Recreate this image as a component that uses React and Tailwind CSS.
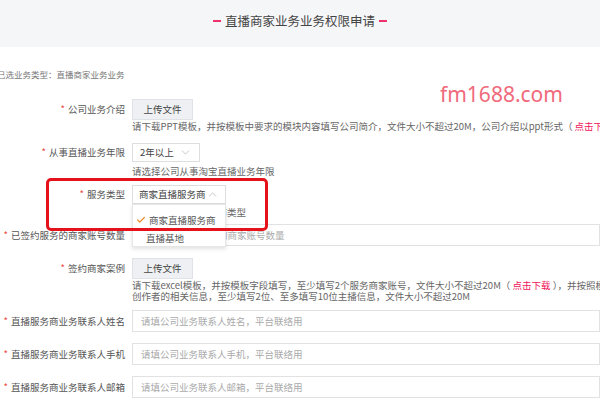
import { ChevronDown, ChevronUp, Check } from 'lucide-react';

const Star = () => <span className="text-[#e8453c] mr-[3px]">*</span>;

const Label = ({ children, className = '' }) => (
  <div className={`w-[125px] shrink-0 text-right text-[#555] whitespace-nowrap ${className}`}>
    <Star />
    {children}
  </div>
);

const UploadButton = () => (
  <button
    type="button"
    className="w-[61px] h-[21px] bg-[#eef0f3] border border-[#dfe2e6] text-[#444] text-[9.5px] leading-none"
  >
    上传文件
  </button>
);

const Hint = ({ children, className = '' }) => (
  <div className={`text-[#666] whitespace-nowrap leading-[11px] ${className}`}>{children}</div>
);

const TextInput = ({ placeholder }) => (
  <div className="flex-1 h-[22px] border border-[#e2e2e2] bg-white flex items-center pl-[8px] text-[#aaa] whitespace-nowrap overflow-hidden">
    {placeholder}
  </div>
);

export default function App() {
  return (
    <div
      className="relative w-[600px] h-[400px] overflow-hidden bg-white text-[9.5px]"
      style={{ fontFamily: '"Noto Sans CJK SC", "Noto Sans", sans-serif' }}
    >
      {/* 标题栏 */}
      <div className="h-[47px] bg-[#f5f6f8] flex items-center justify-center">
        <h1 className="text-[12.5px] text-[#444] flex items-center gap-[4px] -mt-[5px]">
          <span className="w-[8px] h-[2px] bg-[#f0306a]" />
          直播商家业务业务权限申请
          <span className="w-[8px] h-[2px] bg-[#f0306a]" />
        </h1>
      </div>

      <div className="relative pt-[21px]">
        <p className="-ml-[3px] text-[8.5px] text-[#777]">已选业务类型：直播商家业务业务</p>

        {/* 水印 */}
        <div
          className="absolute left-[440px] top-[37px] text-[21px] leading-none text-[#f06a7c]"
          style={{ fontFamily: '"Noto Sans", sans-serif' }}
        >
          fm1688.com
        </div>

        {/* 公司业务介绍 */}
        <div className="flex items-center mt-[18px]">
          <Label>公司业务介绍</Label>
          <div className="ml-[7px]">
            <UploadButton />
          </div>
        </div>
        <Hint className="ml-[132px] mt-[1px]">
          请下载PPT模板，并按模板中要求的模块内容填写公司简介，文件大小不超过20M，公司介绍以ppt形式（
          <span className="text-[#f0145a]"> 点击下载 </span>）
        </Hint>

        {/* 从事直播业务年限 */}
        <div className="flex items-center mt-[11px]">
          <Label>从事直播业务年限</Label>
          <div className="ml-[7px] w-[68px] h-[19px] border border-[#dedede] flex items-center justify-between px-[7px] text-[#444]">
            <span>2年以上</span>
            <ChevronDown size={13} strokeWidth={1.2} className="text-[#aaa]" />
          </div>
        </div>
        <Hint className="ml-[132px] mt-[4px]">请选择公司从事淘宝直播业务年限</Hint>

        {/* 服务类型 */}
        <div className="relative flex items-center mt-[8px]">
          <Label>服务类型</Label>
          <div className="relative ml-[7px] w-[94px] h-[19px] border border-[#dedede] flex items-center justify-between px-[6px] text-[#444]">
            <span>商家直播服务商</span>
            <ChevronUp size={13} strokeWidth={1.2} className="text-[#aaa]" />
            {/* 下拉菜单 */}
            <div className="absolute left-[-1px] top-[18px] w-[94px] h-[43px] bg-white border border-[#e6e6e6] shadow-[0_2px_4px_rgba(0,0,0,0.12)] z-10 pt-[7px]">
              <div className="flex items-center h-[17px] pl-[3px] text-[#555]">
                <Check size={10} strokeWidth={3} className="text-[#f08a24] mr-[3px]" />
                商家直播服务商
              </div>
              <div className="h-[19px] flex items-center pl-[13px] text-[#555]">直播基地</div>
            </div>
          </div>
        </div>
        <Hint className="ml-[132px] mt-[3px]">请选择公司直播服务商类型</Hint>

        {/* 已签约服务的商家账号数量 */}
        <div className="flex items-center mt-[6px]">
          <Label>已签约服务的商家账号数量</Label>
          <div className="ml-[8px] flex-1 flex">
            <TextInput placeholder="请填写已签约服务的商家账号数量" />
          </div>
        </div>

        {/* 签约商家案例 */}
        <div className="flex items-center mt-[12px]">
          <Label>签约商家案例</Label>
          <div className="ml-[7px]">
            <UploadButton />
          </div>
        </div>
        <Hint className="ml-[132px] mt-[1px]">
          请下载excel模板，并按模板字段填写，至少填写2个服务商家账号，文件大小不超过20M（
          <span className="text-[#f0145a]"> 点击下载 </span>），并按照模板要求填写
        </Hint>
        <Hint className="ml-[132px]">创作者的相关信息，至少填写2位、至多填写10位主播信息，文件大小不超过20M</Hint>

        {/* 联系人 */}
        <div className="flex flex-col gap-[11px] mt-[8px]">
          {[
            ['直播服务商业务联系人姓名', '请填公司业务联系人姓名，平台联络用'],
            ['直播服务商业务联系人手机', '请填公司业务联系人手机，平台联络用'],
            ['直播服务商业务联系人邮箱', '请填公司业务联系人邮箱，平台联络用'],
          ].map(([label, ph]) => (
            <div key={label} className="flex items-center">
              <Label>{label}</Label>
              <div className="ml-[7px] flex-1 flex">
                <TextInput placeholder={ph} />
              </div>
            </div>
          ))}
        </div>

        {/* 红色标注框 */}
        <div className="absolute left-[46px] top-[131px] w-[222px] h-[53px] border-[3px] border-[#e5121c] rounded-[5px] z-20" />
      </div>
    </div>
  );
}
